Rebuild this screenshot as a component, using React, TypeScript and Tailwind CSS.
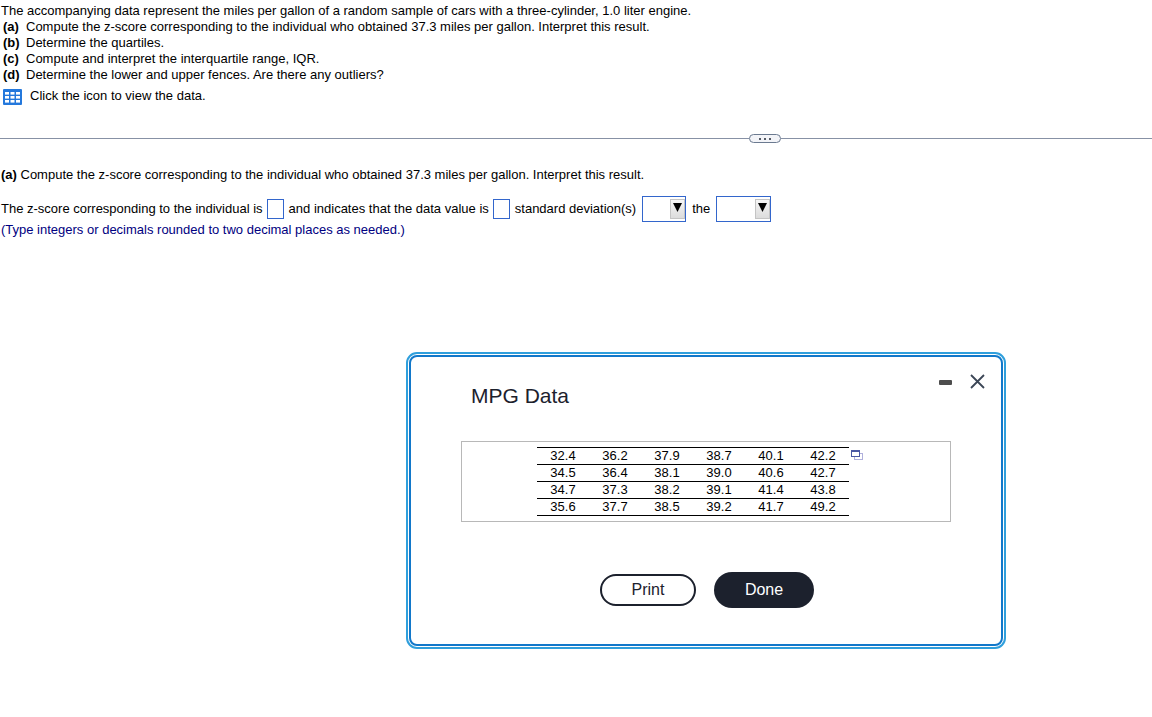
import { useState } from "react";

const parts = [
  {
    label: "(a)",
    text: "Compute the z-score corresponding to the individual who obtained 37.3 miles per gallon. Interpret this result.",
  },
  { label: "(b)", text: "Determine the quartiles." },
  { label: "(c)", text: "Compute and interpret the interquartile range, IQR." },
  {
    label: "(d)",
    text: "Determine the lower and upper fences. Are there any outliers?",
  },
];

const mpgData = [
  ["32.4", "36.2", "37.9", "38.7", "40.1", "42.2"],
  ["34.5", "36.4", "38.1", "39.0", "40.6", "42.7"],
  ["34.7", "37.3", "38.2", "39.1", "41.4", "43.8"],
  ["35.6", "37.7", "38.5", "39.2", "41.7", "49.2"],
];

function DataIcon() {
  return (
    <svg width="19" height="16" viewBox="0 0 19 16">
      <rect width="19" height="16" rx="1" fill="#2478dc" />
      {[3, 7, 11].map((y) =>
        [2, 7.5, 13].map((x) => (
          <rect key={`${x}-${y}`} x={x} y={y} width="4" height="2.6" fill="#fff" />
        ))
      )}
    </svg>
  );
}

function CopyIcon() {
  return (
    <svg width="12" height="10" viewBox="0 0 12 10" shapeRendering="crispEdges">
      <path d="M3 3h9v7H3z" fill="#b0b0dc" />
      <path d="M4 4h7v5H4z" fill="#fff" />
      <path d="M0 0h9v7H0z" fill="#4a58a4" />
      <path d="M1 2h7v4H1z" fill="#fff" />
    </svg>
  );
}

function AnswerInput({ label }: { label: string }) {
  const [value, setValue] = useState("");

  return (
    <input
      type="text"
      aria-label={label}
      value={value}
      onChange={(e) => setValue(e.target.value)}
      className="mr-[5px] ml-1 h-5 w-[17px] border border-[#3366cc] bg-white text-center outline-none"
    />
  );
}

function AnswerSelect({
  label,
  options,
  wide,
}: {
  label: string;
  options: string[];
  wide?: boolean;
}) {
  return (
    <span className="relative mx-[6px] inline-flex">
      <select
        aria-label={label}
        defaultValue=""
        className={`h-[26px] appearance-none border border-[#3366cc] bg-white pr-4 outline-none ${
          wide ? "w-[55px]" : "w-11"
        }`}
      >
        <option value=""></option>
        {options.map((option) => (
          <option key={option}>{option}</option>
        ))}
      </select>
      <span className="pointer-events-none absolute inset-y-[3px] right-px flex w-[15px] justify-center border border-[#c4c4c4] bg-gradient-to-b from-[#f6f6f6] to-[#dcdcdc] pt-[3px]">
        <svg width="9" height="9" viewBox="0 0 9 9" className="shrink-0">
          <path d="M0 0h9L4.5 9z" fill="#000" />
        </svg>
      </span>
    </span>
  );
}

function DataDialog({ onClose }: { onClose: () => void }) {
  return (
    <div
      role="dialog"
      aria-labelledby="dialog-title"
      className="absolute top-[352px] left-[406px] w-[600px] rounded-[11px] border-2 border-[#2f9fdc] bg-white p-px"
    >
      <div className="rounded-lg border-2 border-[#1278ca] px-[50px] pt-[14px] pb-9">
        <div className="-mr-[34px] flex items-start justify-between">
          <h2
            id="dialog-title"
            className="mt-[13px] ml-[10px] text-[21px] leading-6 text-[#1c212d]"
          >
            MPG Data
          </h2>
          <div className="flex items-center gap-4">
            <button
              type="button"
              aria-label="Minimize"
              className="flex h-5 w-4 items-center justify-center"
            >
              <span className="mt-0.5 h-[5px] w-[13px] rounded-[1px] bg-[#4d4d4d]" />
            </button>
            <button
              type="button"
              aria-label="Close"
              onClick={onClose}
              className="flex h-5 w-4 items-center justify-center"
            >
              <svg width="15" height="15" viewBox="0 0 15 15">
                <path
                  d="M1 1l13 13M14 1L1 14"
                  stroke="#3b4656"
                  strokeWidth="1.8"
                />
              </svg>
            </button>
          </div>
        </div>

        <div className="mt-[33px] flex justify-center border border-[#b8b8b8] py-[5px] pr-3">
          <table className="border-collapse text-center">
            <tbody>
              {mpgData.map((row) => (
                <tr key={row[0]} className="border-y border-black">
                  {row.map((value) => (
                    <td key={value} className="w-[52px] p-0">
                      {value}
                    </td>
                  ))}
                </tr>
              ))}
            </tbody>
          </table>
          <button
            type="button"
            aria-label="Copy data"
            className="mt-[3px] ml-0.5 self-start"
          >
            <CopyIcon />
          </button>
        </div>

        <div className="mt-[50px] flex items-center justify-center gap-[18px] pl-0.5 text-base">
          <button
            type="button"
            onClick={() => window.print()}
            className="h-8 w-24 rounded-full border-2 border-[#1c212d] leading-5 text-[#1c212d]"
          >
            Print
          </button>
          <button
            type="button"
            onClick={onClose}
            className="h-9 w-[100px] rounded-full bg-[#1c212d] leading-5 text-white"
          >
            Done
          </button>
        </div>
      </div>
    </div>
  );
}

export default function App() {
  const [showData, setShowData] = useState(true);

  return (
    <main className="relative min-h-screen bg-white font-['Liberation_Sans',Arial,sans-serif] text-[13px] leading-4 text-black">
      <section className="px-px pt-[3px]">
        <p>
          The accompanying data represent the miles per gallon of a random
          sample of cars with a three-cylinder, 1.0 liter engine.
        </p>
        <ul className="pl-0.5">
          {parts.map((part) => (
            <li key={part.label} className="flex">
              <b className="w-[23px] shrink-0">{part.label}</b>
              <span>{part.text}</span>
            </li>
          ))}
        </ul>
        <button
          type="button"
          onClick={() => setShowData(true)}
          className="mt-[5px] ml-0.5 flex gap-2"
        >
          <span className="mt-px">
            <DataIcon />
          </span>
          Click the icon to view the data.
        </button>
      </section>

      <div className="mt-[29px] flex items-center">
        <div className="h-px w-[65%] bg-[#8791a5]" />
        <button
          type="button"
          aria-label="Resize panels"
          className="flex h-[9px] w-8 shrink-0 items-center justify-center gap-[3px] rounded-full border border-[#6b7a90] bg-[#f3f4f8]"
        >
          <span className="size-0.5 bg-[#555b66]" />
          <span className="size-0.5 bg-[#555b66]" />
          <span className="size-0.5 bg-[#555b66]" />
        </button>
        <div className="h-px flex-1 bg-[#8791a5]" />
      </div>

      <section className="px-px pt-6">
        <p>
          <b>(a)</b> Compute the z-score corresponding to the individual who
          obtained 37.3 miles per gallon. Interpret this result.
        </p>
        <div className="mt-[13px] flex flex-wrap items-center">
          <span>The z-score corresponding to the individual is</span>
          <AnswerInput label="z-score" />
          <span>and indicates that the data value is</span>
          <AnswerInput label="Number of standard deviations" />
          <span>standard deviation(s)</span>
          <AnswerSelect label="Direction" options={["above", "below"]} />
          <span>the</span>
          <AnswerSelect label="Center" options={["mean", "median"]} wide />
        </div>
        <p className="text-[#000080]">
          (Type integers or decimals rounded to two decimal places as needed.)
        </p>
      </section>

      {showData && <DataDialog onClose={() => setShowData(false)} />}
    </main>
  );
}
